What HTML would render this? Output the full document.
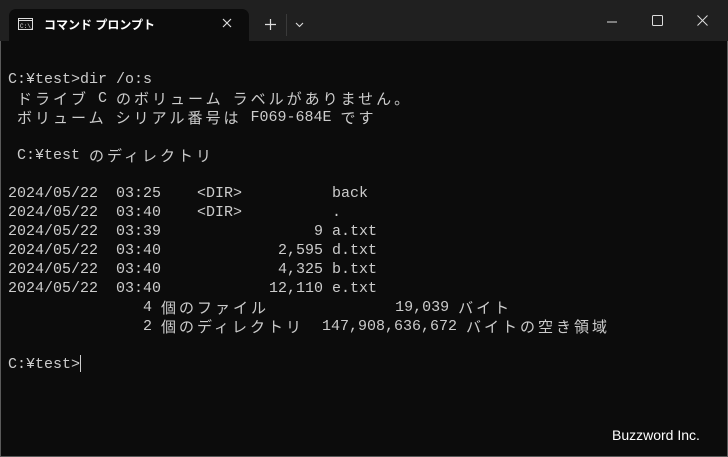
<!DOCTYPE html>
<html><head><meta charset="utf-8"><style>
html,body{margin:0;padding:0;background:#0c0c0c;}
body{width:728px;height:457px;position:relative;overflow:hidden;}
.frame{position:absolute;left:0;top:0;width:726px;height:455px;border:1px solid #5a5a5a;background:#0c0c0c;}
.title{position:absolute;left:0;top:0;width:728px;height:41px;background:#202020;}
.tab{position:absolute;left:9px;top:9px;width:240px;height:32px;background:#0c0c0c;border-radius:7px 7px 0 0;}
.t{position:absolute;color:#fff;font-family:"Liberation Sans","Noto Sans CJK JP",sans-serif;}
.con{position:absolute;left:8px;top:70px;margin:0;font-family:"Liberation Mono",monospace;font-size:15px;color:#cccccc;}
.con div{height:19px;line-height:19px;white-space:pre;overflow:visible;}
.j{font-family:"Noto Sans CJK JP",sans-serif;letter-spacing:3px;font-size:15px;line-height:19px;display:inline-block;height:19px;vertical-align:top;}
</style></head><body>
<div class="frame"></div>
<div class="title"></div>
<div class="tab"></div>
<svg style="position:absolute;left:18px;top:18px" width="15" height="12"><rect x="0.5" y="0.5" width="14" height="11" fill="#111" stroke="#ddd"/><line x1="1" y1="2.5" x2="14" y2="2.5" stroke="#ddd"/><text x="2" y="10" font-size="6" fill="#ddd" font-family="Liberation Mono">C:\_</text></svg>
<div class="t" style="left:44px;top:16px;font-size:12px;font-weight:bold;">コマンド プロンプト</div>
<svg style="position:absolute;left:222px;top:18px" width="10" height="10"><path d="M1 1L9 9M9 1L1 9" stroke="#ddd" stroke-width="1.2"/></svg>
<svg style="position:absolute;left:265px;top:19px" width="11" height="11"><path d="M5.5 0V11M0 5.5H11" stroke="#ddd" stroke-width="1.2"/></svg>
<div style="position:absolute;left:286px;top:14px;width:1px;height:22px;background:#3a3a3a"></div>
<svg style="position:absolute;left:295px;top:22px" width="9" height="6"><path d="M1 1L4.5 4.5L8 1" stroke="#ddd" fill="none" stroke-width="1.1"/></svg>
<svg style="position:absolute;left:607px;top:21px" width="11" height="2"><path d="M0 1H10" stroke="#ddd"/></svg>
<svg style="position:absolute;left:652px;top:15px" width="11" height="11"><rect x="0.5" y="0.5" width="10" height="10" rx="1" stroke="#ddd" fill="none"/></svg>
<svg style="position:absolute;left:697px;top:15px" width="11" height="11"><path d="M0.5 0.5L10.5 10.5M10.5 0.5L0.5 10.5" stroke="#ddd"/></svg>
<div class="con">
<div>C:¥test&gt;dir /o:s</div>
<div> <span class="j">ドライブ</span> C <span class="j">のボリューム</span> <span class="j">ラベルがありません。</span></div>
<div> <span class="j">ボリューム</span> <span class="j">シリアル番号は</span> F069-684E <span class="j">です</span></div>
<div></div>
<div> C:¥test <span class="j">のディレクトリ</span></div>
<div></div>
<div>2024/05/22  03:25    &lt;DIR&gt;          back</div>
<div>2024/05/22  03:40    &lt;DIR&gt;          .</div>
<div>2024/05/22  03:39                 9 a.txt</div>
<div>2024/05/22  03:40             2,595 d.txt</div>
<div>2024/05/22  03:40             4,325 b.txt</div>
<div>2024/05/22  03:40            12,110 e.txt</div>
<div>               4 <span class="j">個のファイル</span>              19,039 <span class="j">バイト</span></div>
<div>               2 <span class="j">個のディレクトリ</span>  147,908,636,672 <span class="j">バイトの空き領域</span></div>
<div></div>
<div>C:¥test&gt;<span style="display:inline-block;width:1px;height:17px;background:#ccc;vertical-align:-4px"></span></div>
</div>
<div class="t" style="left:612px;top:427px;font-size:14px;">Buzzword Inc.</div>
</body></html>
